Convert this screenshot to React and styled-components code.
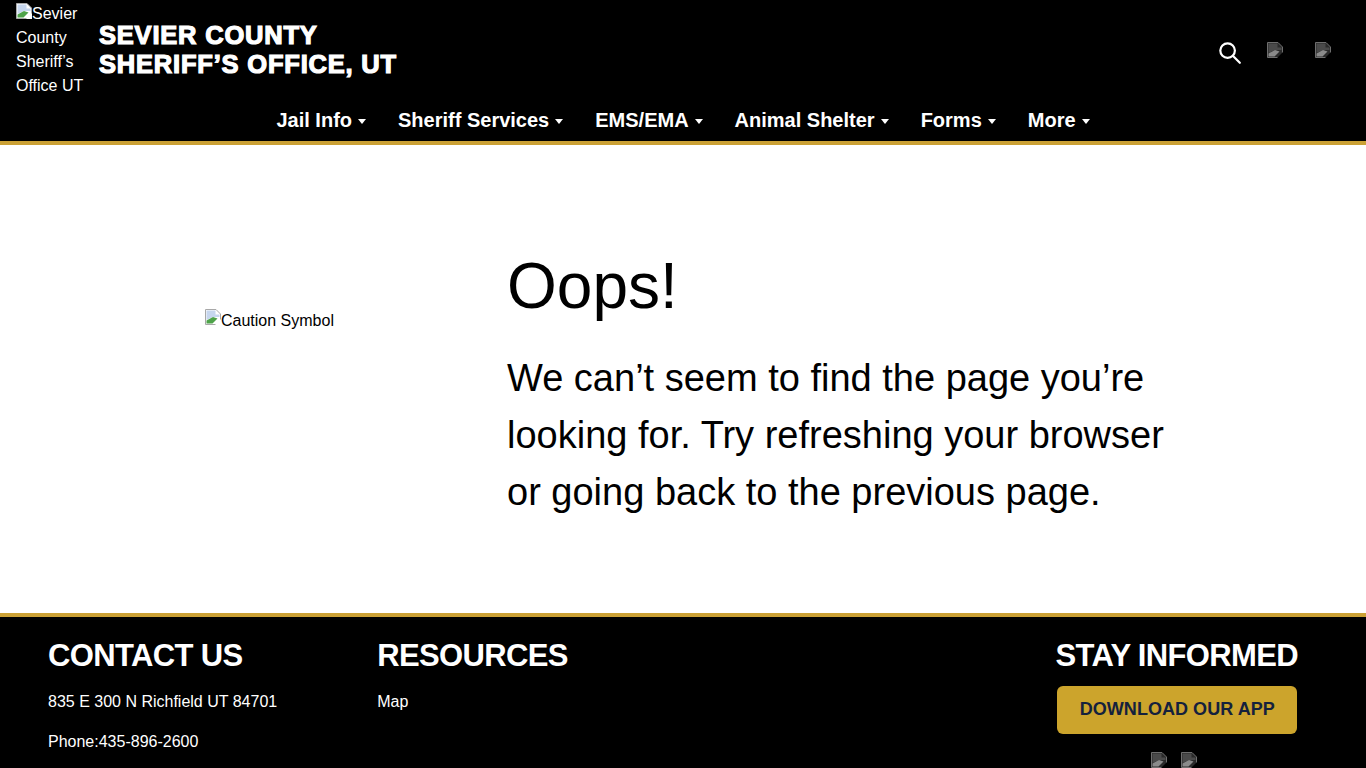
import styled, { createGlobalStyle } from "styled-components";

const colors = {
  gold: "#cba135",
  button: "#cca42c",
  navy: "#14213d",
};

const GlobalStyle = createGlobalStyle`
  html {
    overflow: hidden;
  }
  body {
    margin: 0;
    background: #fff;
    color: #000;
    font-family: "Liberation Sans", Arial, sans-serif;
    font-size: 16px;
  }
`;

const Header = styled.header`
  background: #000;
  border-bottom: 4px solid ${colors.gold};
  color: #fff;
  height: 141px;
`;

const TopRow = styled.div`
  display: flex;
  align-items: center;
  justify-content: space-between;
  height: 98px;
  padding: 1px 35px 0 16px;
  box-sizing: border-box;
`;

const Brand = styled.a`
  display: flex;
  align-items: center;
`;

const LogoAlt = styled.span`
  display: block;
  width: 83px;
  font-size: 16px;
  line-height: 24px;
  color: #fff;
`;

const SiteTitle = styled.h1`
  margin: 0;
  font-size: 25.5px;
  line-height: 29px;
  font-weight: 700;
  letter-spacing: 0.8px;
  -webkit-text-stroke: 1.2px #fff;
  color: #fff;
  text-transform: uppercase;
`;

const Tools = styled.div`
  display: flex;
  align-items: flex-start;
  align-self: flex-start;
  gap: 32px;
  padding-top: 41px;
`;

const SearchButton = styled.span`
  display: block;
  width: 22px;
  height: 22px;
  margin-right: -6px;
`;

const Nav = styled.nav`
  display: flex;
  justify-content: center;
  gap: 32px;
  height: 43px;
`;

const NavItem = styled.a`
  display: flex;
  align-items: center;
  gap: 6px;
  height: 44px;
  font-size: 20px;
  font-weight: 700;
  color: #fff;
  white-space: nowrap;
`;

const Caret = styled.span`
  width: 0;
  height: 0;
  margin-top: 2px;
  border-left: 4px solid transparent;
  border-right: 4px solid transparent;
  border-top: 5px solid #fff;
`;

const Main = styled.main`
  display: flex;
  height: 468px;
`;

const CautionCol = styled.div`
  width: 507px;
  padding: 164px 0 0 205px;
  box-sizing: border-box;
  flex: none;
`;

const AltText = styled.span`
  display: inline-flex;
  align-items: flex-start;
  font-size: 16px;
  line-height: 24px;
  height: 24px;
`;

const MessageCol = styled.div`
  padding-top: 101px;
  width: 680px;
`;

const Heading = styled.h2`
  margin: 0;
  font-size: 64px;
  font-weight: 400;
  line-height: 80px;
`;

const Message = styled.p`
  margin: 24px 0 0;
  font-size: 38px;
  line-height: 57px;
`;

const Footer = styled.footer`
  background: #000;
  border-top: 4px solid ${colors.gold};
  color: #fff;
  display: flex;
  justify-content: space-between;
  padding: 20px 68px 0 48px;
  height: 200px;
`;

const FooterLeft = styled.div`
  display: flex;
  gap: 100px;
`;

const FooterCol = styled.div`
  min-width: 229px;
`;

const FooterTitle = styled.h3`
  margin: 0 0 ${({ $flush }) => ($flush ? "0" : "17px")};
  padding-top: 1px;
  height: 35px;
  font-size: 31px;
  line-height: 36px;
  font-weight: 700;
  letter-spacing: -0.65px;
  text-transform: uppercase;
`;

const FooterLine = styled.p`
  margin: 0 0 16px;
  font-size: 16px;
  line-height: 24px;
`;

const StayCol = styled.div`
  display: flex;
  flex-direction: column;
  align-items: center;
`;

const AppButton = styled.a`
  display: flex;
  align-items: center;
  justify-content: center;
  width: 240px;
  height: 48px;
  margin: 13px 0 18px;
  padding: 0 0 2px 1px;
  box-sizing: border-box;
  border-radius: 6px;
  background: ${colors.button};
  color: ${colors.navy};
  font-size: 18px;
  font-weight: 700;
  letter-spacing: 0.05px;
`;

const SocialRow = styled.div`
  display: flex;
  gap: 14px;
  padding-right: 6px;
`;

const SearchIcon = () => (
  <svg width="22" height="22" viewBox="0 0 22 22" fill="none" stroke="#fff" strokeWidth="2.2" strokeLinecap="round">
    <circle cx="8.6" cy="8.6" r="7.3" />
    <path d="M13.8 13.8 L20.8 20.8" />
  </svg>
);

// the reference shows the browser's broken image glyph wherever a picture failed
const BrokenImage = () => (
  <svg width="16" height="16" viewBox="0 0 16 16" style={{ flex: "none" }}>
    <path d="M0.5 0.5 H11 L15.5 5 V15.5 H0.5 Z" fill="#fff" stroke="#a8a8a8" />
    <path d="M1.5 1.5 H10.5 V5.5 H14.5 V8 L8 8 L1.5 11 Z" fill="#c6d6ee" />
    <path d="M1.5 14.5 V11.5 L8 8 L12.5 9.5 L7.5 14.5 Z" fill="#4fa34a" />
    <path d="M10 16 L16 10 V16 Z" fill="#fff" />
  </svg>
);

const DarkBrokenImage = () => (
  <svg width="16" height="16" viewBox="0 0 16 16" style={{ flex: "none" }}>
    <path d="M0.5 0.5 H11 L15.5 5 V15.5 H0.5 Z" fill="#2a2a2a" stroke="#6e6e6e" />
    <path d="M1.5 1.5 H10.5 V5.5 H14.5 V8 L8 8 L1.5 11 Z" fill="#4a4a4a" />
    <path d="M1.5 14.5 V11.5 L8 8 L12.5 9.5 L7.5 14.5 Z" fill="#8a8a8a" />
    <path d="M10 16 L16 10 V16 Z" fill="#000" />
  </svg>
);

const navItems = ["Jail Info", "Sheriff Services", "EMS/EMA", "Animal Shelter", "Forms", "More"];

const App = () => {
  return (
    <>
      <GlobalStyle />
      <Header>
        <TopRow>
          <Brand>
            <LogoAlt>
              <BrokenImage />
              Sevier County Sheriff’s Office UT
            </LogoAlt>
            <SiteTitle>
              Sevier County
              <br />
              Sheriff’s Office, UT
            </SiteTitle>
          </Brand>
          <Tools>
            <SearchButton>
              <SearchIcon />
            </SearchButton>
            <DarkBrokenImage />
            <DarkBrokenImage />
          </Tools>
        </TopRow>
        <Nav>
          {navItems.map((item) => (
            <NavItem key={item}>
              {item}
              <Caret />
            </NavItem>
          ))}
        </Nav>
      </Header>
      <Main>
        <CautionCol>
          <AltText>
            <BrokenImage />
            Caution Symbol
          </AltText>
        </CautionCol>
        <MessageCol>
          <Heading>Oops!</Heading>
          <Message>We can’t seem to find the page you’re looking for. Try refreshing your browser or going back to the previous page.</Message>
        </MessageCol>
      </Main>
      <Footer>
        <FooterLeft>
          <FooterCol>
            <FooterTitle>Contact Us</FooterTitle>
            <FooterLine>835 E 300 N Richfield UT 84701</FooterLine>
            <FooterLine>Phone:435-896-2600</FooterLine>
          </FooterCol>
          <FooterCol>
            <FooterTitle>Resources</FooterTitle>
            <FooterLine>Map</FooterLine>
          </FooterCol>
        </FooterLeft>
        <StayCol>
          <FooterTitle $flush>Stay Informed</FooterTitle>
          <AppButton>DOWNLOAD OUR APP</AppButton>
          <SocialRow>
            <DarkBrokenImage />
            <DarkBrokenImage />
          </SocialRow>
        </StayCol>
      </Footer>
    </>
  );
};

export default App;
